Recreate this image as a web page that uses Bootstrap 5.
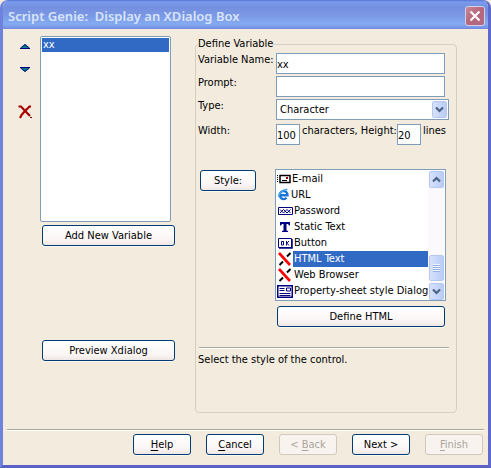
<!DOCTYPE html>
<html lang="en">
<head>
<meta charset="utf-8">
<meta name="viewport" content="width=device-width, initial-scale=1">
<title>Script Genie: Display an XDialog Box</title>
<link href="https://cdn.jsdelivr.net/npm/bootstrap@5.3.0/dist/css/bootstrap.min.css" rel="stylesheet">
<style>
  body { font: 11px/14px "DejaVu Sans Condensed", Tahoma, sans-serif; color: #000; background: #f2ebde; }
  .xp-window { background: #f2ebde; border: 3px solid #6f82dd; border-top: 0; border-right-color: #5f68cb; border-bottom-color: #5a60c6; border-radius: 8px 8px 0 0; overflow: hidden; }
  .xp-title { height: 29px; margin: 0 -3px; padding: 2px 6px 0 8px; background: linear-gradient(#5673d2 0, #7a9bec 2px, #748fe0 7px, #7a97e4 15px, #84abf2 24px, #7b9aea 27px, #6f86dd 29px); }
  .xp-title h1 { font-family: "Noto Sans", "Trebuchet MS", sans-serif; font-size: 13px; line-height: 22px; font-weight: 600; color: #d9e4fa; white-space: nowrap; }
  .xp-close { width: 20px; height: 20px; border: 1px solid #d3cfe9; border-radius: 3px; background: linear-gradient(135deg, #c78a99, #b7657c 50%, #b06a84); }
  .xp-btn { height: 21px; border: 1px solid #003c74; border-radius: 3px; background: linear-gradient(#fff, #fbf6f5 70%, #eee7e4); color: #000; padding: 0; font-size: 11px; line-height: 14px; box-shadow: 0 1px 0 #fbf8f2; }
  .xp-btn:disabled { border-color: #cfc8bd; background: #f8f3ee; color: #aaa59b; box-shadow: none; }
  .xp-btn u { text-underline-offset: 2px; }
  .xp-field { height: 21px; border: 1px solid #7f9db9; background: #fff; color: #000; padding: 1px 0 0 0; font-size: 11px; border-radius: 0; min-width: 0; }
  select.xp-field { appearance: none; padding: 0 20px 0 3px; }
  .xp-list { border: 1px solid #7f9db9; background: #fff; }
  .xp-main { padding-top: 7px; }
  .side-tools { width: 37px; padding-left: 7px; }
  .icon-btn { border: 0; background: none; padding: 0; line-height: 0; width: 16px; }
  .icon-btn.down { margin-top: 18px; }
  .icon-btn.del { margin-top: 33px; }
  .side-main { width: 135px; }
  select.names { width: 131px; height: 186px; padding: 1px; overflow: hidden; font-size: 11px; color: #000; outline: 0; }
  .names option { padding: 0 1px; min-height: 14px; line-height: 14px; }
  .names option:checked { background: linear-gradient(#316ac5, #316ac5); -webkit-text-fill-color: #fff; }
  .side-main .xp-btn { margin-left: 2px; width: 133px; }
  .add { margin-top: 3px; }
  .preview-gap { margin-top: 94px; }
  .group-wrap { min-width: 0; }
  .group { margin: 0 31px 0 20px; min-height: 377px; min-width: 0; border: 1px solid #d5cfc1; border-radius: 4px; padding: 0 7px 0 2px; }
  .group legend { float: none; width: auto; margin: 0 0 1px; font-size: 11px; line-height: 16px; background: #f2ebde; }
  .form-rows { display: grid; grid-template-columns: 78px minmax(0, 1fr); row-gap: 2px; }
  .form-rows label { white-space: nowrap; }
  .end-inset { margin-right: 4px; }
  .num { width: 24px; flex: none; }
  .size-row { margin-top: 2px; }
  .size-row label, .size-row span { padding-left: 2px; }
  .style-row { display: grid; grid-template-columns: 77px minmax(0, 1fr); margin-top: 24px; }
  .style-btn { width: 56px; margin: 1px 0 0 2px; }
  .style-list { margin-right: 3px; padding: 1px 1px 0 0; height: 132px; }
  .opt { border: 0; background: none; height: 16px; padding: 0; text-align: left; white-space: nowrap; font-size: 11px; line-height: 16px; }
  .opt svg { flex: none; margin-left: 1px; }
  .opt span { flex: 1; padding-left: 1px; }
  .opt[aria-selected=true] span { background: #316ac5; color: #fff; }
  .xp-scroll { width: 16px; background: #fbf9fb; }
  .sb { width: 15px; height: 17px; padding: 0; line-height: 0; border: 1px solid #b7c8f0; border-radius: 2px; background: linear-gradient(90deg, #d6e1fc, #b9ccf6); }
  .thumb { height: 26px; margin-top: 67px; }
  .drop { top: 2px; right: 2px; pointer-events: none; display: grid; place-items: center; }
  .define { margin: 5px 4px 0 79px; }
  .rule { border: 0; border-top: 1px solid #aca899; border-bottom: 1px solid #fff; opacity: 1; }
  .group .rule { margin: 20px 0 4px 1px; }
  .foot { gap: 15px; padding: 3px 5px 10px; }
  .foot .xp-btn { width: 58px; }
</style>
<script src="https://cdn.jsdelivr.net/npm/bootstrap@5.3.0/dist/js/bootstrap.bundle.min.js"></script>
</head>
<body>
<div class="xp-window min-vh-100 d-flex flex-column">
  <header class="xp-title d-flex align-items-center justify-content-between">
    <h1 class="m-0">Script Genie:&nbsp; Display an XDialog Box</h1>
    <button type="button" class="xp-close p-0 d-flex align-items-center justify-content-center" aria-label="Close">
      <svg width="12" height="12" viewBox="0 0 12 12"><path d="M1.500 1.500l9 9M10.500 1.500l-9 9" stroke="#fff" stroke-width="2.200"/></svg>
    </button>
  </header>

  <main class="xp-main d-flex flex-grow-1">
    <div class="d-flex flex-shrink-0">
      <div class="side-tools d-flex flex-column align-items-center pt-1">
        <button type="button" class="icon-btn mt-1" aria-label="Move up"><svg width="10" height="5" viewBox="0 0 10 5"><path d="M5 0L9.500 4.500H.5z" fill="#008080"/><path d="M.5 4L5 .5 9.500 4M0 4.500h10" fill="none" stroke="#000080"/></svg></button>
        <button type="button" class="icon-btn down" aria-label="Move down"><svg width="10" height="5" viewBox="0 0 10 5"><path d="M5 5L9.500 .5H.5z" fill="#008080"/><path d="M.5 1L5 4.500 9.500 1M0 .5h10" fill="none" stroke="#000080"/></svg></button>
        <button type="button" class="icon-btn del" aria-label="Delete"><svg width="14" height="14" viewBox="0 0 14 14"><path d="M.5 1.500h2.500L12 11" fill="none" stroke="#a80000" stroke-width="2.200"/><path d="M13 1.500h-1.500L7 6 3.500 10 2 13" fill="none" stroke="#a80000" stroke-width="2.200"/><path d="M12 12.500h2" stroke="#700000"/></svg></button>
      </div>
      <div class="side-main d-flex flex-column align-items-start">
        <select class="xp-list names" size="11" aria-label="Variables"><option selected>xx</option></select>
        <button type="button" class="xp-btn add">Add New Variable</button>
        <button type="button" class="xp-btn preview-gap">Preview Xdialog</button>
      </div>
    </div>

    <div class="group-wrap flex-grow-1">
    <fieldset class="group">
      <legend>Define Variable</legend>
      <div class="form-rows">
        <label for="vname">Variable Name:</label>
        <input id="vname" class="xp-field end-inset" value="xx">
        <label for="prompt">Prompt:</label>
        <input id="prompt" class="xp-field end-inset">
        <label for="type">Type:</label>
        <div class="position-relative d-flex">
          <select id="type" class="xp-field w-100"><option>Character</option></select>
          <span class="sb drop position-absolute"><svg width="9" height="7" viewBox="0 0 9 7"><path d="M1 1.500l3.500 3.500L8 1.500" fill="none" stroke="#4d6185" stroke-width="2.200"/></svg></span>
        </div>
        <label for="width" class="size-row">Width:</label>
        <div class="d-flex size-row end-inset">
          <input id="width" class="xp-field num" value="100">
          <label for="height" class="flex-grow-1">characters, Height:</label>
          <input id="height" class="xp-field num" value="20">
          <span>lines</span>
        </div>
      </div>

      <div class="style-row">
        <button type="button" class="xp-btn style-btn">Style:</button>
        <div class="xp-list style-list d-flex">
          <div class="flex-grow-1 d-flex flex-column overflow-hidden" role="listbox" aria-label="Style">
            <button type="button" class="opt d-flex align-items-center" role="option"><svg width="14" height="12" viewBox="0 0 14 12"><path d="M.5 2v8" stroke="#000" stroke-dasharray="1 1"/><path d="M3 2.500h10v7H3z" fill="#fff" stroke="#000" stroke-width="1.500"/><path d="M5 7.500h5" stroke="#000"/><path d="M9 4h2v2h-2z" fill="#a00000"/></svg><span>E-mail</span></button>
            <button type="button" class="opt d-flex align-items-center" role="option"><svg width="13" height="14" viewBox="0 0 13 14"><path d="M3.300 7.200h7.200a3.900 4.100 0 1 0-1 2.600" fill="none" stroke="#1b75d6" stroke-width="2.400"/><path d="M2 9C1 6 6 1 10.500 1.500" fill="none" stroke="#45a8ee" stroke-width="1.500"/></svg><span>URL</span></button>
            <button type="button" class="opt d-flex align-items-center" role="option"><svg width="16" height="10" viewBox="0 0 16 10"><path d="M1.500 1.500h14v7h-14z" fill="#fff" stroke="#000080"/><path d="M3 3.500l3.500 3.500L10 3.500 13.500 7M3 7l3.500-3.500L10 7l3.500-3.500" fill="none" stroke="#000080"/></svg><span>Password</span></button>
            <button type="button" class="opt d-flex align-items-center" role="option"><svg width="16" height="12" viewBox="0 0 16 12"><path d="M3 1h10v3.500h-1L11 3H9.500v6.500l1.500.5v1H5v-1l1.500-.5V3H5L4 4.500H3z" fill="#000080"/></svg><span>Static Text</span></button>
            <button type="button" class="opt d-flex align-items-center" role="option"><svg width="16" height="12" viewBox="0 0 16 12"><path d="M1.500 1.500h13v9h-13z" fill="#fff" stroke="#000080"/><path d="M15 2v9H2" fill="none" stroke="#000080" stroke-width="1.500"/><path d="M4.500 4.500h2v3.500h-2zM9.500 4v4.500M12 4L10 6.200l2 2.300" fill="none" stroke="#000080"/></svg><span>Button</span></button>
            <button type="button" class="opt d-flex align-items-center" role="option" aria-selected="true"><svg width="16" height="14" viewBox="0 0 16 14"><path d="M13.500 1L10 4.500M6 9.500L2.500 13" stroke="#000" stroke-width="2"/><path d="M2 1l11 12" stroke="#f00" stroke-width="2.600"/></svg><span>HTML Text</span></button>
            <button type="button" class="opt d-flex align-items-center" role="option"><svg width="16" height="14" viewBox="0 0 16 14"><path d="M13.500 1L10 4.500M6 9.500L2.500 13" stroke="#000" stroke-width="2"/><path d="M2 1l11 12" stroke="#f00" stroke-width="2.600"/></svg><span>Web Browser</span></button>
            <button type="button" class="opt d-flex align-items-center" role="option"><svg width="16" height="13" viewBox="0 0 16 13"><path d="M.75 .75h14.500v11.500H.75z" fill="#fff" stroke="#000080" stroke-width="1.500"/><path d="M2.500 3.500h5M2.500 5.500h5M2.500 8.500h11M2.500 10.500h11M9.500 3h4v3h-4z" fill="none" stroke="#000080"/></svg><span>Property-sheet style Dialog</span></button>
          </div>
          <div class="xp-scroll flex-shrink-0 d-flex flex-column align-items-center">
            <button type="button" class="sb" aria-label="Scroll up"><svg width="9" height="7" viewBox="0 0 9 7"><path d="M1 5.500L4.500 2 8 5.500" fill="none" stroke="#4d6185" stroke-width="2.200"/></svg></button>
            <div class="sb thumb d-flex align-items-center justify-content-center"><svg width="7" height="8" viewBox="0 0 7 8"><path d="M0 .5h7M0 2.500h7M0 4.500h7M0 6.500h7" stroke="#eef4fe"/><path d="M0 1.500h7M0 3.500h7M0 5.500h7M0 7.500h7" stroke="#98b0e4"/></svg></div>
            <button type="button" class="sb mt-auto" aria-label="Scroll down"><svg width="9" height="7" viewBox="0 0 9 7"><path d="M1 1.500l3.500 3.500L8 1.500" fill="none" stroke="#4d6185" stroke-width="2.200"/></svg></button>
          </div>
        </div>
      </div>
      <div class="define d-grid"><button type="button" class="xp-btn">Define HTML</button></div>
      <hr class="rule">
      <p class="m-0">Select the style of the control.</p>
    </fieldset>
    </div>
  </main>

  <hr class="rule my-0 mx-1">
  <footer class="foot d-flex justify-content-end">
    <button type="button" class="xp-btn"><u>H</u>elp</button>
    <button type="button" class="xp-btn"><u>C</u>ancel</button>
    <button type="button" class="xp-btn" disabled>&lt; <u>B</u>ack</button>
    <button type="button" class="xp-btn">Next &gt;</button>
    <button type="button" class="xp-btn" disabled><u>F</u>inish</button>
  </footer>
</div>
</body>
</html>
